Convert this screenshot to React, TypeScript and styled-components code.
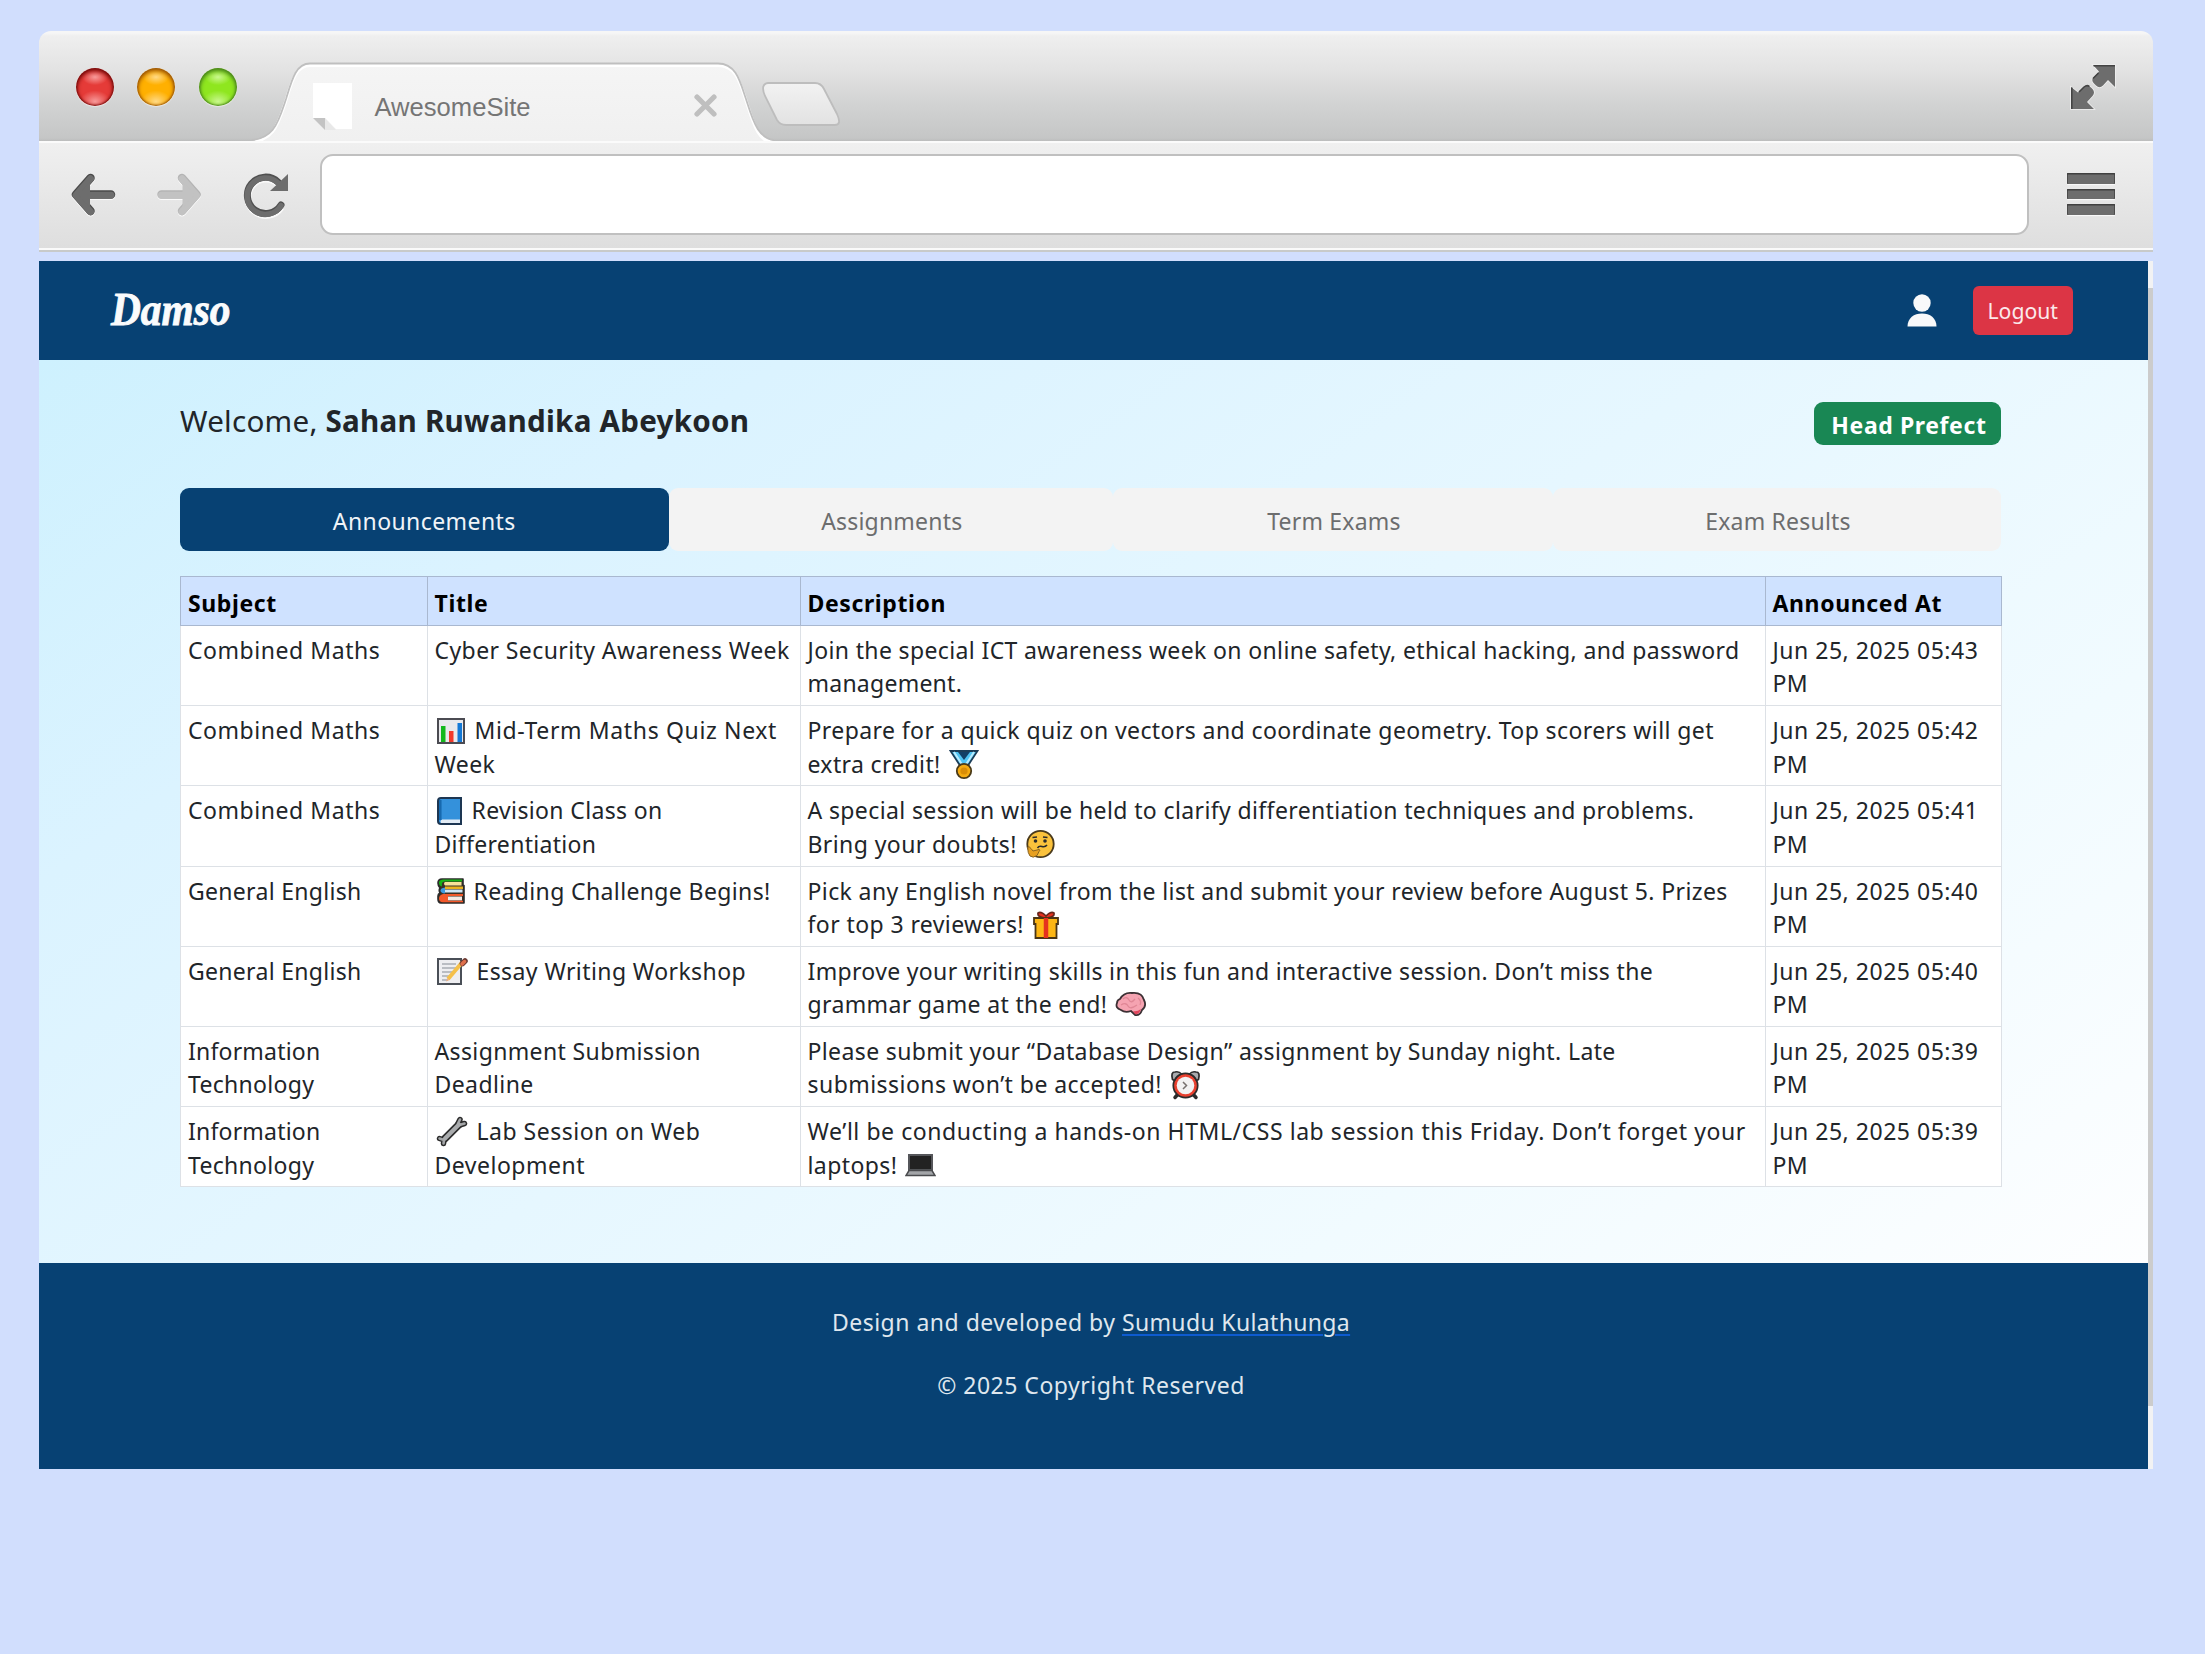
import React from "react";
import styled, { createGlobalStyle } from "styled-components";

const ui = `"Noto Sans", "Open Sans", sans-serif`;

const Global = createGlobalStyle`
  * { box-sizing: border-box; }
  html, body { margin: 0; background: #d1defd; }
  body { font-family: ${ui}; color: #212529; }
  #root { display: flow-root; }
  svg { display: block; flex: none; }
`;

const Desktop = styled.main`
  width: 2205px;
  height: 1654px;
  padding: 31px 52px 0 39px;
  background: #d1defd;
  overflow: hidden;
`;

const Chrome = styled.div`
  height: 221px;
  margin-bottom: 9px;
  border-radius: 12px 12px 0 0;
  overflow: hidden;
  border-bottom: 2px solid #c8cac9;
`;

const TitleBar = styled.div`
  display: flex;
  height: 110px;
  background: linear-gradient(#f6f6f6 0, #f6f6f6 2px, #efefef 5px, #e3e3e3 38px, #d3d4d4 70px, #c5c6c6 107px, #bcbdbd 110px);
`;

const Lights = styled.div`
  display: flex;
  gap: 23.7px;
  padding: 37px 0 0 36.7px;
  width: 213px;
`;

const Light = styled.i<{ $rim: string; $core: string; $glow: string }>`
  width: 38px;
  height: 38px;
  border-radius: 50%;
  background:
    radial-gradient(ellipse 13px 8px at 50% 24%, ${p => p.$glow}, transparent),
    radial-gradient(ellipse 15px 11px at 50% 88%, ${p => p.$glow}, transparent),
    ${p => p.$core};
  box-shadow: inset 0 2px 4px 1px ${p => p.$rim}, inset 0 0 2px 1px ${p => p.$rim}, 0 1px 1px #e8e8e8;
`;

const Tab = styled.div`
  position: relative;
  display: flex;
  width: 522px;
  padding: 52px 0 0 60.5px;
`;

const TabShape = styled.svg`
  position: absolute;
  left: 0;
  top: 30px;
`;

const TabTitle = styled.span`
  position: relative;
  width: 342px;
  padding-left: 23px;
  margin-top: 0;
  font: 25.6px/48px "Liberation Sans", Arial, sans-serif;
  color: #757575;
`;

const CloseIcon = styled.svg`
  position: relative;
  margin-top: 10.5px;
`;

const FileIcon = styled.svg`
  position: relative;
`;

const NewTab = styled.svg`
  margin: 49.5px auto 0 -12px;
`;

const ExpandIcon = styled.svg`
  margin: 33px 37px 0 0;
`;

const ToolBar = styled.div`
  display: flex;
  align-items: flex-start;
  height: 109px;
  padding: 13px 38px 0 32px;
  border-top: 2px solid #fbfbfb;
  border-bottom: 2px solid #fafafa;
  background: linear-gradient(#f0f0f0, #dedede);
`;

const NavIcons = styled.div`
  display: flex;
  gap: 41.4px;
  width: 249px;
  padding-top: 16.5px;
`;

const Address = styled.div`
  width: 1709px;
  height: 81px;
  margin-top: -2px;
  border: 2px solid #c0c0c0;
  border-radius: 13px;
  background: #fff;
`;

const Burger = styled.div`
  display: flex;
  flex-direction: column;
  gap: 5px;
  margin: 17px 0 0 auto;
`;

const BurgerLine = styled.i`
  width: 48px;
  height: 10.6px;
  border-radius: 1px;
  background: #6d6d6d;
  box-shadow: inset 0 1.5px #414141, inset 1px 0 #4c4c4c, inset -1px 0 #4c4c4c, 0 1px 1px #fafafa;
`;

const Viewport = styled.div`
  display: flex;
  height: 1208px;
`;

const Page = styled.div`
  display: flex;
  flex-direction: column;
  width: 2109px;
`;

const Scroll = styled.div`
  width: 5px;
  padding: 27px 0 63px;
  background: #f2f2f3;
`;

const Thumb = styled.div`
  height: 100%;
  background: #cccccc;
`;

const Header = styled.header`
  display: flex;
  align-items: flex-start;
  height: 99.4px;
  padding: 25px 75.5px 0 72px;
  background: #074173;
`;

const Brand = styled.div`
  margin: -2px auto 0 0;
  font: italic 700 47px/50px "Liberation Serif", serif;
  color: #fafbfc;
  -webkit-text-stroke: 0.9px #fafbfc;
  transform: scaleX(0.88);
  transform-origin: 0 0;
`;

const UserIcon = styled.svg`
  margin: 8px 36px 0 0;
`;

const Logout = styled.button`
  width: 99.5px;
  height: 48.5px;
  padding: 1px 0 0;
  border: 0;
  border-radius: 6px;
  background: #dc3545;
  color: #fbe9eb;
  font: 21.2px/47px ${ui};
`;

const Content = styled.section`
  height: 902.6px;
  padding: 0 147px 0 141px;
  background: linear-gradient(145deg, #cef1fe 0%, #dbf3ff 22%, #e6f7ff 50%, #f1fbff 75%, #fdfeff 100%);
`;

const Greeting = styled.div`
  display: flex;
  justify-content: space-between;
  height: 127.6px;
`;

const Welcome = styled.h4`
  margin: 41px 0 0;
  font: 400 29.6px/40px ${ui};
  letter-spacing: 0.24px;
`;

const Badge = styled.span`
  height: 42.5px;
  margin-top: 42px;
  padding: 0 14.5px 0 17.5px;
  border-radius: 9px;
  background: #198754;
  color: #fff;
  font: 700 23px/46px ${ui};
  letter-spacing: 0.6px;
`;

const Tabs = styled.nav`
  display: grid;
  grid-template-columns: 488.5px 444.5px 440px 448px;
  grid-template-rows: 63px;
  height: 63px;
`;

const TabLink = styled.a<{ $active?: boolean }>`
  border-radius: 9px;
  padding-left: ${p => (p.$active ? 0 : "2px")};
  background: ${p => (p.$active ? "#074173" : "#f3f3f3")};
  color: ${p => (p.$active ? "#f0f4f8" : "#6c6d6e")};
  font-size: 23px;
  line-height: 66px;
  letter-spacing: ${p => (p.$active ? "0.42px" : "0.2px")};
  text-align: center;
`;

const Table = styled.div`
  width: 1822px;
  margin-top: 25px;
`;

const Row = styled.div<{ $head?: boolean }>`
  display: grid;
  grid-template-columns: 245.5px 373px 965px 1fr;
  height: ${p => (p.$head ? "50px" : "80.2px")};
  border: solid ${p => (p.$head ? "#a9b8d0" : "#dde1e6")};
  border-width: ${p => (p.$head ? "1px" : "0 1px 1px")};
  background: ${p => (p.$head ? "#cfe2ff" : "#fff")};
  color: ${p => (p.$head ? "#000" : "#212529")};
  font-weight: ${p => (p.$head ? 700 : 400)};
  letter-spacing: ${p => (p.$head ? "0.62px" : "0.41px")};
`;

const Cell = styled.div<{ $head?: boolean }>`
  padding: ${p => (p.$head ? "10px" : "8px")} 0 0 7px;
  font-size: 23px;
  line-height: 33.4px;
  white-space: nowrap;
  border-left: 1px solid ${p => (p.$head ? "#a9b8d0" : "#dde1e6")};
  &:first-child { border-left: 0; }
`;

const Line = styled.div<{ $spacing?: number }>`
  display: flex;
  align-items: center;
  gap: 9px;
  height: 33.4px;
  ${p => p.$spacing && `letter-spacing: ${p.$spacing}px;`}
  svg:first-child { margin-left: 1px; }
  svg:last-child { margin-left: -1px; }
`;

const Footer = styled.footer`
  flex: 1;
  padding: 42.5px 5px 0 0;
  background: #074173;
  color: #dfe7ee;
  text-align: center;
  font-size: 23px;
  letter-spacing: 0.5px;
`;

const Credit = styled.p`
  margin: 0 0 28.6px;
  line-height: 34px;
`;

const Author = styled.a`
  color: #dfe7ee;
  letter-spacing: 0.35px;
  text-decoration: underline #0d5bd0 2px;
  text-underline-offset: 3px;
`;

const ink = "#2b2b2b";

const emoji: Record<string, React.ReactNode> = {
  chart: (
    <svg width="30" height="28" viewBox="0 0 30 28">
      <rect x="2" y="2" width="26" height="24" fill="#e9e9ec" stroke="#4b4b52" strokeWidth="2" />
      <rect x="5" y="9" width="4.5" height="16" fill="#14b81c" />
      <rect x="13" y="14" width="4.5" height="11" fill="#f2392b" />
      <rect x="21.5" y="6" width="4.5" height="19" fill="#1479d6" />
    </svg>
  ),
  book: (
    <svg width="27" height="31" viewBox="0 0 27 31">
      <path d="M5 2H25V28H5Q2 28 2 25V5Q2 2 5 2Z" fill="#3491db" stroke="#1d3652" strokeWidth="2" />
      <path d="M6 23.5H24V27H5Q3.5 25 6 23.5Z" fill="#e3ecf5" />
      <path d="M4.3 4V24" stroke="#1769ae" strokeWidth="2.5" />
    </svg>
  ),
  books: (
    <svg width="29" height="28" viewBox="0 0 29 28">
      <path d="M6 2H27V8.5H28V26H5Q2 26 2 22V19Q2 17 4 16Q2.5 13 4 11Q2 9 2 6Q2 2 6 2Z" fill="#3a3026" stroke={ink} strokeWidth="1.6" strokeLinejoin="round" />
      <path d="M25.5 5H9Q7 6.5 9 8.5H25.5Z" fill="#f6e29a" />
      <path d="M26 2.5H7Q2.5 3 3 6Q3 8.5 6 9.5Q5 5 8.5 4.5H26Z" fill="#16b316" />
      <path d="M27 9.5H9V12H27Z" fill="#e9b21e" />
      <path d="M26.5 12.5H9V15.5H26.5Z" fill="#cfe6f7" />
      <path d="M9 10.5Q4.5 11 4.5 13.5T9 16.5Z" fill="#3d9be0" />
      <path d="M26 19.5H12V23.5H26Z" fill="#f4e9e4" />
      <path d="M27 17H7Q3 18 3 21.5T7 25.2H27V23.8H12V19H27Z" fill="#f2582a" />
    </svg>
  ),
  memo: (
    <svg width="32" height="31" viewBox="0 0 32 31">
      <path d="M2 3H25V28H2Z" fill="#eeeef1" stroke="#4a4f57" strokeWidth="2" />
      <path d="M6 8H20M6 12H20M6 16H17M6 20H14M6 24H12" stroke="#a9adb4" strokeWidth="1.5" />
      <path d="M12 23L26 6.5" stroke="#f5c04a" strokeWidth="4" />
      <path d="M26.5 7.5L29 5" stroke="#6b3a32" strokeWidth="5.5" strokeLinecap="round" />
      <path d="M26 8L28.5 5.5" stroke="#e0704c" strokeWidth="3.5" strokeLinecap="round" />
      <path d="M10 25.5L13.5 24L11.5 22Z" fill="#f0b080" />
    </svg>
  ),
  wrench: (
    <svg width="32" height="31" viewBox="0 0 32 31">
      <g strokeLinecap="round" strokeLinejoin="round" fill="none">
        <path d="M9 22.5L23 8.5" stroke={ink} strokeWidth="7.5" />
        <path d="M3.5 22.5L8 24L7.5 27.5M22 7.5L24 3.5M23.5 9L28.5 7.5" stroke={ink} strokeWidth="5.5" />
        <path d="M3.5 22.5L8 24L7.5 27.5M22 7.5L24 3.5M23.5 9L28.5 7.5" stroke="#a3a5a7" strokeWidth="2.6" />
        <path d="M9 22.5L23 8.5" stroke="#a9abad" strokeWidth="4.2" />
      </g>
    </svg>
  ),
  medal: (
    <svg width="30" height="31" viewBox="0 0 30 31">
      <path d="M1.5 2H28.5L18 18H12Z" fill="#4fc3f2" stroke="#1b3c57" strokeWidth="1.8" />
      <path d="M9 3H21L15 11Z" fill="#123f66" />
      <path d="M5 3L14 17M25 3L16 17" stroke="#b9ecff" strokeWidth="2" />
      <circle cx="15" cy="22" r="7.2" fill="#f4aa10" stroke="#4a3a18" strokeWidth="1.8" />
      <circle cx="15" cy="22" r="3.6" fill="#d98d06" />
    </svg>
  ),
  thinking: (
    <svg width="31" height="30" viewBox="0 0 31 30">
      <circle cx="15.5" cy="15" r="13.2" fill="#fbc23c" stroke="#4a3a1c" strokeWidth="1.8" />
      <circle cx="10.5" cy="12" r="1.8" fill={ink} />
      <circle cx="20" cy="12" r="1.8" fill={ink} />
      <path d="M7.5 8.5L12 8M18 8L22.5 8.5M12.500 19Q14 16.5 17 17.5T22 16" stroke={ink} strokeWidth="1.6" fill="none" />
      <path d="M2.8 18Q4 17 6 19.5L8 22L14 20.5Q16 21 14 22.5L12 26.5Q8 29.5 5 27Q2.5 24 2.8 18Z" fill="#e8a020" stroke="#8a6420" strokeWidth="1" />
    </svg>
  ),
  gift: (
    <svg width="28" height="30" viewBox="0 0 28 30">
      <path d="M13 8Q5 7 6 3Q9 1 14 6Q19 1 22 3Q23 7 15 8Z" fill="#e5321e" stroke="#66261b" strokeWidth="1.6" />
      <path d="M2 8H26V14H24.5V28H3.5V14H2Z" fill="#fdb614" stroke="#4a3515" strokeWidth="1.8" />
      <path d="M14 8V28" stroke="#e5321e" strokeWidth="4.5" />
    </svg>
  ),
  brain: (
    <svg width="32" height="27" viewBox="0 0 32 27">
      <path d="M5 8Q9 1 17 2Q27 1 29 9Q32 15 27 19Q25 25 20 24L16 20Q10 22 6 19Q0 17 2 12Q2 9 5 8Z" fill="#f5a3b1" stroke="#3c3034" strokeWidth="1.8" />
      <path d="M8 8Q12 5 14 9T20 8M6 14Q11 11 13 15T22 14M23 7Q27 10 25 14" fill="none" stroke="#e08796" strokeWidth="1.3" />
      <path d="M18 20Q22 21 26 18Q24 24 20 23Z" fill="#e0455b" />
    </svg>
  ),
  clock: (
    <svg width="31" height="30" viewBox="0 0 31 30">
      <path d="M5 27.5L9 23M26 27.5L22 23" stroke={ink} strokeWidth="3.5" strokeLinecap="round" />
      <circle cx="15.5" cy="15.5" r="12.2" fill="#e8402f" stroke={ink} strokeWidth="1.7" />
      <circle cx="15.5" cy="15.5" r="8.8" fill="#f3f1f2" />
      <path d="M2.5 9.5Q.5 2 5 2Q9 1 11.5 4Q6.5 5.5 4.5 10.5ZM28.5 9.5Q30.5 2 26 2Q22 1 19.5 4Q24.5 5.5 26.5 10.5Z" fill="#a9abae" stroke={ink} strokeWidth="1.7" strokeLinejoin="round" />
      <path d="M13 12L16.5 15.5L13 19" fill="none" stroke="#77706e" strokeWidth="1.5" />
    </svg>
  ),
  laptop: (
    <svg width="31" height="24" viewBox="0 0 31 24">
      <rect x="4" y="2" width="23" height="15" fill="#222" stroke="#55565a" strokeWidth="2" />
      <path d="M4 17.5H27L30 22.5H1Z" fill="#a3a5a8" stroke="#4a4b4e" strokeWidth="1.5" />
    </svg>
  ),
};

const navTabs = ["Announcements", "Assignments", "Term Exams", "Exam Results"];

type Part = { text: string; before?: string; after?: string; spacing?: number };
type Entry = { subject: Part[]; title: Part[]; description: Part[]; time: string };

const t = (text: string, extra: Partial<Part> = {}): Part => ({ text, ...extra });

const entries: Entry[] = [
  {
    subject: [t("Combined Maths", { spacing: 0.55 })],
    title: [t("Cyber Security Awareness Week")],
    description: [t("Join the special ICT awareness week on online safety, ethical hacking, and password", { spacing: 0.37 }), t("management.", { spacing: 0.25 })],
    time: "05:43",
  },
  {
    subject: [t("Combined Maths", { spacing: 0.55 })],
    title: [t("Mid-Term Maths Quiz Next", { before: "chart", spacing: 0.64 }), t("Week")],
    description: [t("Prepare for a quick quiz on vectors and coordinate geometry. Top scorers will get"), t("extra credit!", { after: "medal", spacing: 0.35 })],
    time: "05:42",
  },
  {
    subject: [t("Combined Maths", { spacing: 0.55 })],
    title: [t("Revision Class on", { before: "book", spacing: 0.36 }), t("Differentiation", { spacing: 0.3 })],
    description: [t("A special session will be held to clarify differentiation techniques and problems.", { spacing: 0.38 }), t("Bring your doubts!", { after: "thinking" })],
    time: "05:41",
  },
  {
    subject: [t("General English", { spacing: 0.3 })],
    title: [t("Reading Challenge Begins!", { before: "books", spacing: 0.37 })],
    description: [t("Pick any English novel from the list and submit your review before August 5. Prizes", { spacing: 0.39 }), t("for top 3 reviewers!", { after: "gift" })],
    time: "05:40",
  },
  {
    subject: [t("General English", { spacing: 0.3 })],
    title: [t("Essay Writing Workshop", { before: "memo" })],
    description: [t("Improve your writing skills in this fun and interactive session. Don’t miss the", { spacing: 0.34 }), t("grammar game at the end!", { after: "brain", spacing: 0.36 })],
    time: "05:40",
  },
  {
    subject: [t("Information", { spacing: 0.2 }), t("Technology", { spacing: 0.3 })],
    title: [t("Assignment Submission", { spacing: 0.37 }), t("Deadline")],
    description: [t("Please submit your “Database Design” assignment by Sunday night. Late", { spacing: 0.38 }), t("submissions won’t be accepted!", { after: "clock", spacing: 0.45 })],
    time: "05:39",
  },
  {
    subject: [t("Information", { spacing: 0.2 }), t("Technology", { spacing: 0.3 })],
    title: [t("Lab Session on Web", { before: "wrench", spacing: 0.5 }), t("Development", { spacing: 0.5 })],
    description: [t("We’ll be conducting a hands-on HTML/CSS lab session this Friday. Don’t forget your", { spacing: 0.56 }), t("laptops!", { after: "laptop" })],
    time: "05:39",
  },
];

const Lines = ({ parts }: { parts: Part[] }) => (
  <>
    {parts.map(p => (
      <Line key={p.text} $spacing={p.spacing}>
        {p.before && emoji[p.before]}
        <span>{p.text}</span>
        {p.after && emoji[p.after]}
      </Line>
    ))}
  </>
);

const arrowPath = "M19.5 5L5 21.5L19.5 38M8 21.5H40";

const Arrow = ({ color, dark, flip }: { color: string; dark: string; flip?: boolean }) => (
  <svg width="44.5" height="44" viewBox="0 0 44.5 44">
    <g transform={flip ? "translate(44.5 0) scale(-1 1)" : undefined} strokeLinecap="round" strokeLinejoin="round" fill="none">
      <path d={arrowPath} stroke="#fafafa" strokeWidth="8.5" transform="translate(0 1.2)" />
      <path d={arrowPath} stroke={dark} strokeWidth="8.5" />
      <path d={arrowPath} stroke={color} strokeWidth="7" transform="translate(0 .8)" />
      <path d="M19 9V35L7 21.5Z" fill={color} stroke="none" />
    </g>
  </svg>
);

export default function App() {
  return (
    <Desktop>
      <Global />
      <Chrome>
        <TitleBar>
          <Lights>
            <Light $rim="#7d0d0d" $core="#e53b38" $glow="#f79a9a" />
            <Light $rim="#a05a08" $core="#ffb001" $glow="#ffd985" />
            <Light $rim="#4d8a1d" $core="#8fe61f" $glow="#c9f78e" />
          </Lights>
          <Tab>
            <TabShape width="522" height="80" viewBox="0 0 522 80">
              <defs>
                <linearGradient id="tab" x2="0" y2="1">
                  <stop stopColor="#f5f5f5" />
                  <stop offset="1" stopColor="#f0f0f0" />
                </linearGradient>
              </defs>
              <path d="M0 80C22 78 26 62 34 38C40 18 44 3 60 3H466C484 3 488 20 494 38C501 60 504 76 522 80Z" fill="url(#tab)" />
              <path d="M-6 80C22 80 26 62 34 38C40 18 44 3 58 3H466C484 3 488 20 494 38C501 60 506 80 522 80" fill="none" stroke="#fff" strokeWidth="3" transform="translate(0 1.5)" />
              <path d="M-6 79.5C22 79.5 26 62 34 38C40 18 44 2.5 58 2.5H466C484 2.5 488 20 494 38C501 60 506 79.5 526 79.5" fill="none" stroke="#bfbfbf" strokeWidth="1.8" />
            </TabShape>
            <FileIcon width="39" height="48" viewBox="0 0 39 48">
              <path d="M0 0H39V46H23L12 35H0Z" fill="#fff" />
              <path d="M0 35H12V47Z" fill="#c3c3c3" />
              <path d="M12 35V47H23Z" fill="#e8e8e8" />
            </FileIcon>
            <TabTitle>AwesomeSite</TabTitle>
            <CloseIcon width="23" height="23" viewBox="0 0 23 23">
              <path d="M3 3L20 20M20 3L3 20" stroke="#bfbfbf" strokeWidth="5.2" strokeLinecap="round" />
            </CloseIcon>
          </Tab>
          <NewTab width="80" height="46" viewBox="0 0 80 46">
            <defs>
              <linearGradient id="plus" x2="0" y2="1">
                <stop stopColor="#f2f2f2" />
                <stop offset="1" stopColor="#e2e2e2" />
              </linearGradient>
            </defs>
            <path d="M6 2H53Q59 2 62 8L75 33Q80 44 73 44H24Q18 44 15 39L3 15Q-2 3 6 2Z" fill="url(#plus)" stroke="#bdbdbd" strokeWidth="1.8" />
          </NewTab>
          <ExpandIcon width="46" height="46" viewBox="0 0 46 46">
            <g stroke="#f0f0f0" strokeWidth="1.5" paintOrder="stroke" fill="#6d6d6d">
              <path d="M23 1H45V23L38 16L33 21.5Q29.5 25 26 21.5L24 19.5Q20.5 16 24 12.5L29 7.5Z" />
              <path d="M1 23L8 28.5L13 23.5Q17 19.5 21 23.5L22.5 25Q25.5 28.5 22.5 32L17 38L24 45H1Z" />
            </g>
            <path d="M23.5 1.8H45M1.8 23.5V45M28.5 9L23 14.5M9 28L14 23Q17 20.5 19.5 22.5" fill="none" stroke="#444" strokeWidth="1.6" />
          </ExpandIcon>
        </TitleBar>
        <ToolBar>
          <NavIcons>
            <Arrow color="#6d6d6d" dark="#4a4a4a" />
            <Arrow color="#c2c2c2" dark="#b4b4b4" flip />
            <svg width="46" height="46" viewBox="0 0 46 46">
              <path d="M38 33A18.2 18.2 0 1 1 35 9" fill="none" stroke="#fafafa" strokeWidth="7" transform="translate(0 1.5)" />
              <path d="M38 32A18.2 18.2 0 1 1 35 9" fill="none" stroke="#505050" strokeWidth="7" strokeLinecap="round" />
              <path d="M38 32A18.2 18.2 0 1 1 35 9.5" fill="none" stroke="#6d6d6d" strokeWidth="5.5" strokeLinecap="round" transform="translate(0 .6)" />
              <path d="M45 1V18H27Z" fill="#6d6d6d" />
            </svg>
          </NavIcons>
          <Address />
          <Burger>
            <BurgerLine />
            <BurgerLine />
            <BurgerLine />
          </Burger>
        </ToolBar>
      </Chrome>
      <Viewport>
        <Page>
          <Header>
            <Brand>Damso</Brand>
            <UserIcon width="30" height="34" viewBox="0 0 30 34">
              <circle cx="15" cy="9" r="8.7" fill="#f8f9fa" />
              <path d="M.5 32.5C.5 24 7 19.5 15 19.5S29.5 24 29.5 32.5Z" fill="#f8f9fa" />
            </UserIcon>
            <Logout>Logout</Logout>
          </Header>
          <Content>
            <Greeting>
              <Welcome>
                Welcome, <b>Sahan Ruwandika Abeykoon</b>
              </Welcome>
              <Badge>Head Prefect</Badge>
            </Greeting>
            <Tabs>
              {navTabs.map((name, i) => (
                <TabLink key={name} $active={i === 0}>
                  {name}
                </TabLink>
              ))}
            </Tabs>
            <Table>
              <Row $head>
                <Cell $head>Subject</Cell>
                <Cell $head>Title</Cell>
                <Cell $head>Description</Cell>
                <Cell $head>Announced At</Cell>
              </Row>
              {entries.map(e => (
                <Row key={e.title[0].text}>
                  <Cell><Lines parts={e.subject} /></Cell>
                  <Cell><Lines parts={e.title} /></Cell>
                  <Cell><Lines parts={e.description} /></Cell>
                  <Cell>
                    <Line $spacing={0.52}>Jun 25, 2025 {e.time}</Line>
                    <Line>PM</Line>
                  </Cell>
                </Row>
              ))}
            </Table>
          </Content>
          <Footer>
            <Credit>
              Design and developed by <Author>Sumudu Kulathunga</Author>
            </Credit>
            <Credit>© 2025 Copyright Reserved</Credit>
          </Footer>
        </Page>
        <Scroll>
          <Thumb />
        </Scroll>
      </Viewport>
    </Desktop>
  );
}
